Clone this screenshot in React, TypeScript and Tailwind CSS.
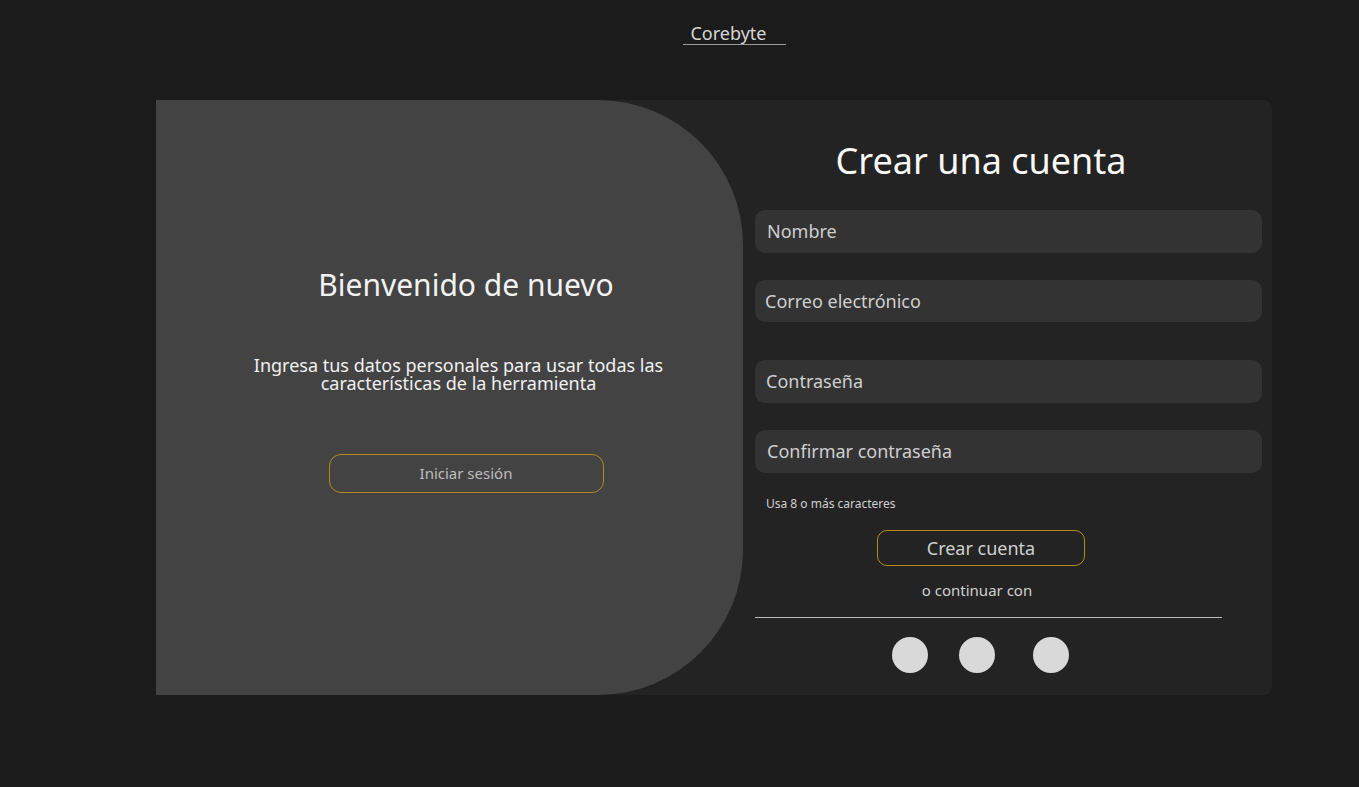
import React from "react";

const campos = [
  { label: "Nombre", className: "mt-[25px] h-[43px] pl-3" },
  { label: "Correo electrónico", className: "mt-[27px] h-[42px] pl-[10px]" },
  { label: "Contraseña", className: "mt-[38px] h-[43px] pl-[11px]" },
  { label: "Confirmar contraseña", className: "mt-[27px] h-[43px] pl-3" },
];

export default function App() {
  return (
    <div
      className="min-h-[787px] w-full bg-[#1b1b1b] text-white"
      style={{ fontFamily: '"Noto Sans", "Open Sans", sans-serif' }}
    >
      {/* Cabecera */}
      <div className="flex justify-center pt-[22px] pl-[110px]">
        <span className="inline-block border-b border-[#9a9a9a] pl-[7px] pr-[19px] text-[18px] leading-[22px] text-[#d6d6d6]">
          Corebyte
        </span>
      </div>

      {/* Tarjeta */}
      <div className="mt-[55px] ml-[156px] flex h-[595px] w-[1116px] rounded-r-lg bg-[#232323]">
        {/* Panel izquierdo */}
        <div className="flex w-[587px] flex-col items-center rounded-r-[145px] bg-[#434343] pl-[33px]">
          <h2 className="mt-[164px] text-[30px] leading-[42px] text-[#f2f2f2]">Bienvenido de nuevo</h2>
          <p className="mt-[50px] mr-[15px] text-center text-[18px] leading-[18px] text-[#f0f0f0]">
            Ingresa tus datos personales para usar todas las
            <br />
            características de la herramienta
          </p>
          <button className="mt-[62px] h-[39px] w-[275px] rounded-xl border border-[#b38b1c] text-[15px] text-[#bdbdbd]">
            Iniciar sesión
          </button>
        </div>

        {/* Panel derecho */}
        <div className="flex flex-1 flex-col pl-3 pr-[10px]">
          <h1 className="mt-[37px] w-[452px] text-center text-[36px] leading-[48px] text-[#f7f7f7]">
            Crear una cuenta
          </h1>

          {campos.map((c) => (
            <div
              key={c.label}
              className={"flex items-center rounded-[10px] bg-[#333333] text-[18px] text-[#cfcfcf] " + c.className}
            >
              {c.label}
            </div>
          ))}

          <p className="mt-[23px] pl-[11px] text-[12px] leading-[16px] text-[#d0d0d0]">Usa 8 o más caracteres</p>

          <div className="flex w-[452px] flex-col items-center">
            <button className="mt-[18px] h-[36px] w-[208px] rounded-[10px] border border-[#b38b1c] text-[18px] text-[#cfcfcf]">
              Crear cuenta
            </button>
            <p className="mt-[14px] mr-[8px] text-[15px] leading-[20px] text-[#d0d0d0]">o continuar con</p>
          </div>

          <div className="mt-[17px] h-px w-[467px] bg-[#bdbdbd]" />

          <div className="mt-[19px] flex w-[452px] justify-center gap-[31px] pr-[2px]">
            <span className="h-9 w-9 rounded-full bg-[#d9d9d9]" />
            <span className="h-9 w-9 rounded-full bg-[#d9d9d9]" />
            <span className="ml-[7px] h-9 w-9 rounded-full bg-[#d9d9d9]" />
          </div>
        </div>
      </div>
    </div>
  );
}
